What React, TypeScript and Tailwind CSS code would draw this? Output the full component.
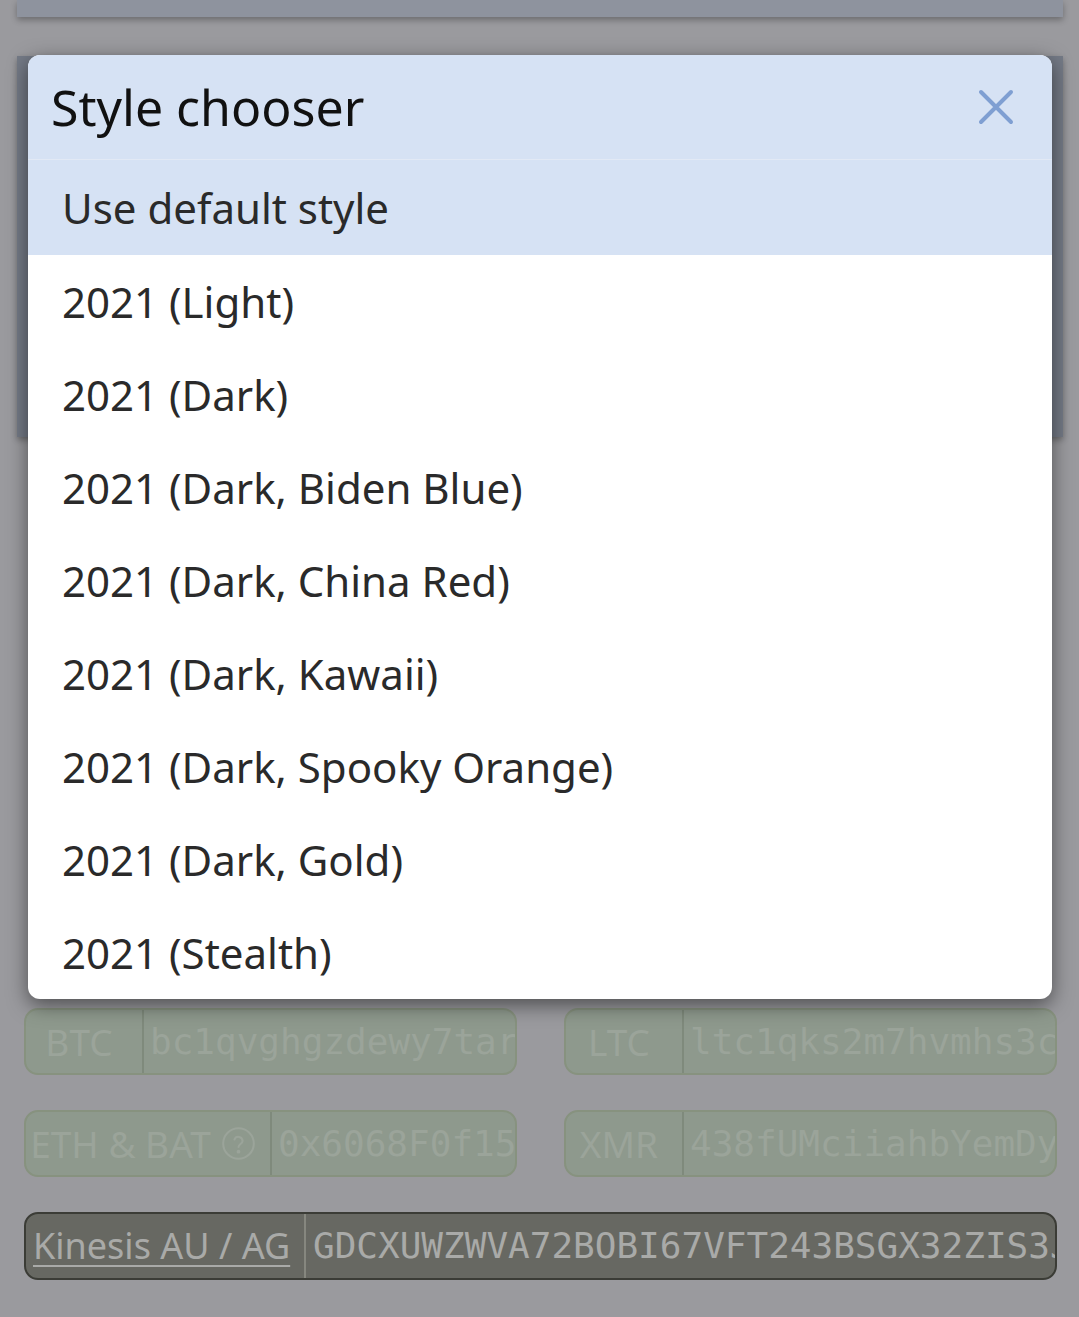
import React from "react";

const items = [
  "2021 (Light)",
  "2021 (Dark)",
  "2021 (Dark, Biden Blue)",
  "2021 (Dark, China Red)",
  "2021 (Dark, Kawaii)",
  "2021 (Dark, Spooky Orange)",
  "2021 (Dark, Gold)",
  "2021 (Stealth)",
];

function Group({
  label,
  value,
  labelW,
  icon,
}: {
  label: string;
  value: string;
  labelW: string;
  icon?: boolean;
}) {
  return (
    <div className="flex h-[67px] items-stretch overflow-hidden rounded-[14px] border-2 border-[#87927f] bg-[#8e998d]">
      <div
        className={`${labelW} flex shrink-0 items-center justify-center gap-[10px] border-r-2 border-[#7f8a7c] pr-[10px] text-[37px] text-[#9ba49a]`}
        style={{ fontFamily: '"Noto Sans", sans-serif' }}
      >
        <span>{label}</span>
        {icon && (
          <svg width="35" height="35" viewBox="0 0 24 24" fill="none" stroke="#9ba49a" strokeWidth="1.4">
            <circle cx="12" cy="12" r="10.5" />
            <path d="M9.2 9.3a2.9 2.9 0 0 1 5.6.9c0 1.9-2.8 2.4-2.8 4.2" strokeLinecap="round" />
            <circle cx="12" cy="17.6" r="0.6" fill="#9ba49a" />
          </svg>
        )}
      </div>
      <div
        className="flex min-w-0 flex-1 items-center overflow-hidden whitespace-nowrap pl-[6px] text-[36px] text-[#9ba49a]"
        style={{ fontFamily: '"DejaVu Sans Mono", monospace' }}
      >
        <span className="block min-w-0 overflow-hidden">{value}</span>
      </div>
    </div>
  );
}

export default function App() {
  return (
    <div
      className="relative h-[1317px] w-[1079px] overflow-hidden bg-[#9a9a9e]"
      style={{ fontFamily: '"Noto Sans", "Open Sans", sans-serif' }}
    >
      {/* background page (dimmed) */}
      <div className="ml-[17px] mr-[16px] h-[17px] bg-[#8e939e] shadow-[0_3px_6px_rgba(0,0,0,0.3)]" />
      <div className="ml-[17px] mr-[16px] mt-[39px] h-[381px] bg-[#747a86] shadow-[0_3px_6px_rgba(0,0,0,0.3)]" />
      <div className="mt-[571px] px-[22px] pl-[24px]">
        <div className="grid grid-cols-2 gap-x-[47px] gap-y-[35px]">
          <Group label="BTC" value="bc1qvghgzdewy7tar" labelW="w-[118px]" />
          <Group label="LTC" value="ltc1qks2m7hvmhs3c" labelW="w-[118px]" />
          <Group label="ETH & BAT" value="0x6068F0f15" labelW="w-[246px]" icon />
          <Group label="XMR" value="438fUMciiahbYemDy" labelW="w-[118px]" />
        </div>
        <div className="mt-[35px] flex h-[68px] items-stretch overflow-hidden rounded-[14px] border-2 border-[#3b3c36] bg-[#676862]">
          <div className="flex w-[280px] shrink-0 items-center border-r-2 border-[#86877f] pl-[7px] text-[36px] text-[#a9aaa8]">
            <span className="underline decoration-2 underline-offset-[6px]">Kinesis AU / AG</span>
          </div>
          <div
            className="flex min-w-0 flex-1 items-center overflow-hidden whitespace-nowrap pl-[7px] text-[36px] text-[#a9aaa8]"
            style={{ fontFamily: '"DejaVu Sans Mono", monospace' }}
          >
            <span className="block min-w-0 overflow-hidden">GDCXUWZWVA72BOBI67VFT243BSGX32ZIS3J</span>
          </div>
        </div>
      </div>

      {/* modal */}
      <div className="absolute left-[28px] top-[55px] w-[1024px] overflow-hidden rounded-[12px] bg-white shadow-[0_6px_20px_rgba(0,0,0,0.5)]">
        <div className="flex h-[105px] items-center justify-between border-b border-[#e2e9f5] bg-[#d6e2f4] pl-[23px] pr-[38px]">
          <h2 className="text-[50px] leading-none text-[#111111]">Style chooser</h2>
          <svg width="36" height="36" viewBox="0 0 36 36" fill="none" stroke="#7f9fd2" strokeWidth="4" strokeLinecap="round">
            <path d="M3 3L33 33M33 3L3 33" />
          </svg>
        </div>
        <div className="flex h-[95px] items-center bg-[#d6e2f4] pl-[34px] text-[42px] text-[#2a2a2a]">
          Use default style
        </div>
        {items.map((t) => (
          <div key={t} className="flex h-[93px] items-center pl-[34px] text-[42px] text-[#2a2a2a]">
            {t}
          </div>
        ))}
      </div>
    </div>
  );
}
